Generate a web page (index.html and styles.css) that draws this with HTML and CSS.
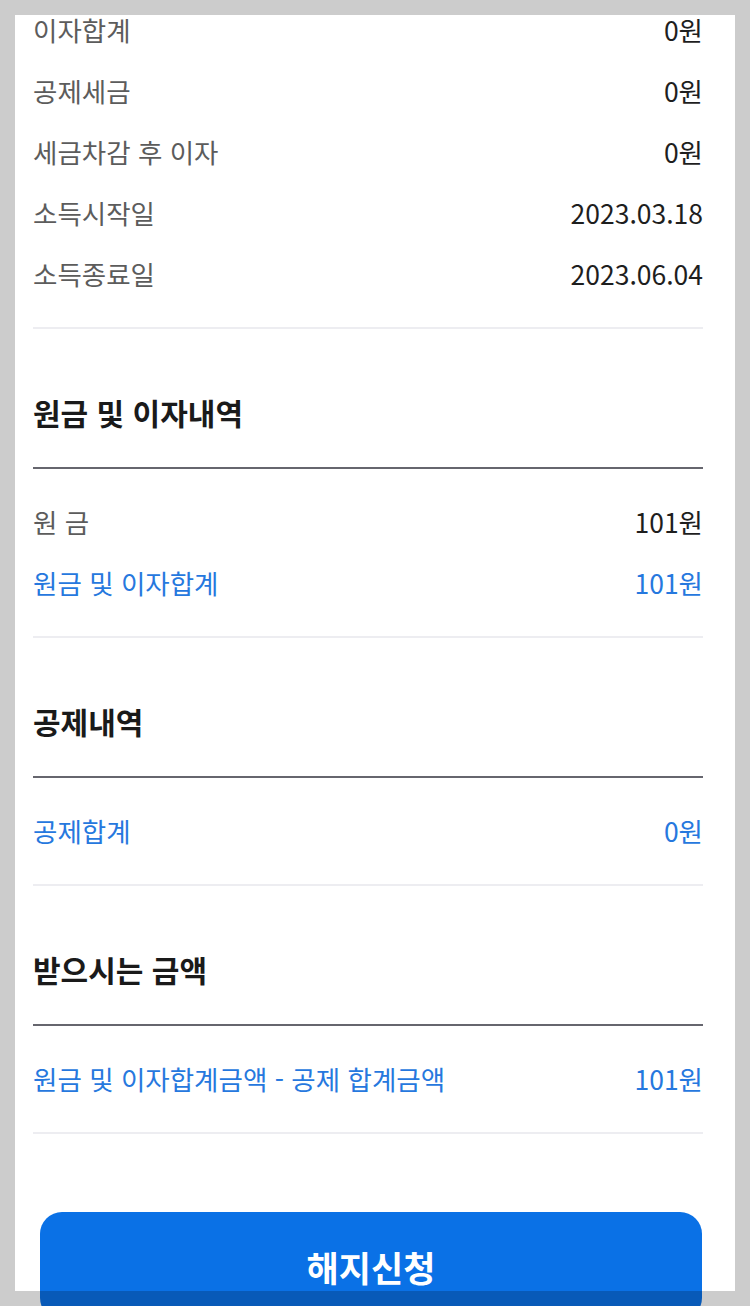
FILE: index.html
```html
<!DOCTYPE html>
<html lang="ko">
<head>
    <meta charset="UTF-8">
    <meta name="viewport" content="width=device-width, initial-scale=1.0">
    <title>해지신청</title>
    <link rel="stylesheet" href="styles.css">
</head>
<body>
    <div class="page">
        <div class="section first">
            <div class="row"><span class="label">이자합계</span><span class="value">0원</span></div>
            <div class="row"><span class="label">공제세금</span><span class="value">0원</span></div>
            <div class="row"><span class="label">세금차감 후 이자</span><span class="value">0원</span></div>
            <div class="row"><span class="label">소득시작일</span><span class="value">2023.03.18</span></div>
            <div class="row"><span class="label">소득종료일</span><span class="value">2023.06.04</span></div>
        </div>

        <h2 class="section-title">원금 및 이자내역</h2>
        <div class="section">
            <div class="row"><span class="label">원 금</span><span class="value">101원</span></div>
            <div class="row total"><span class="label">원금 및 이자합계</span><span class="value">101원</span></div>
        </div>

        <h2 class="section-title">공제내역</h2>
        <div class="section">
            <div class="row total"><span class="label">공제합계</span><span class="value">0원</span></div>
        </div>

        <h2 class="section-title">받으시는 금액</h2>
        <div class="section">
            <div class="row total"><span class="label">원금 및 이자합계금액 - 공제 합계금액</span><span class="value">101원</span></div>
        </div>

        <button class="submit-btn" type="button">해지신청</button>
    </div>
    <div class="frame"></div>
</body>
</html>
```

FILE: styles.css
```css
* {
    margin: 0;
    padding: 0;
    box-sizing: border-box;
    font-family: "Noto Sans CJK KR", "Noto Sans", sans-serif;
}
body { background: #fff; overflow: hidden; }
.page { width: 750px; padding: 0 47px 0 33px; }

.section { padding: 22px 0; border-bottom: 2px solid #ededf1; }
.section.first { padding-top: 0; }
.row {
    display: flex; justify-content: space-between; align-items: center;
    height: 61px; font-size: 26.5px; line-height: 1;
}
.label { color: #5c5c5c; }
.value { color: #1e1e1e; }
.row.total .label, .row.total .value { color: #2678de; }

.section-title {
    margin-top: 63px; padding-bottom: 35px;
    font-size: 30px; line-height: 40px; font-weight: 700; color: #1a1a1a;
    border-bottom: 2px solid #66666e;
}
.section-title + .section { padding-top: 23px; }

.submit-btn {
    display: block; width: 662px; height: 108px; margin: 78px 0 0 7px;
    border: none; border-radius: 22px; background: #0a71e6;
    color: #fff; font-size: 35px; font-weight: 600;
}

.frame {
    position: fixed; top: 0; left: 0; right: 0; bottom: 0;
    border: 15px solid rgba(0,0,0,0.2); pointer-events: none;
}
```
